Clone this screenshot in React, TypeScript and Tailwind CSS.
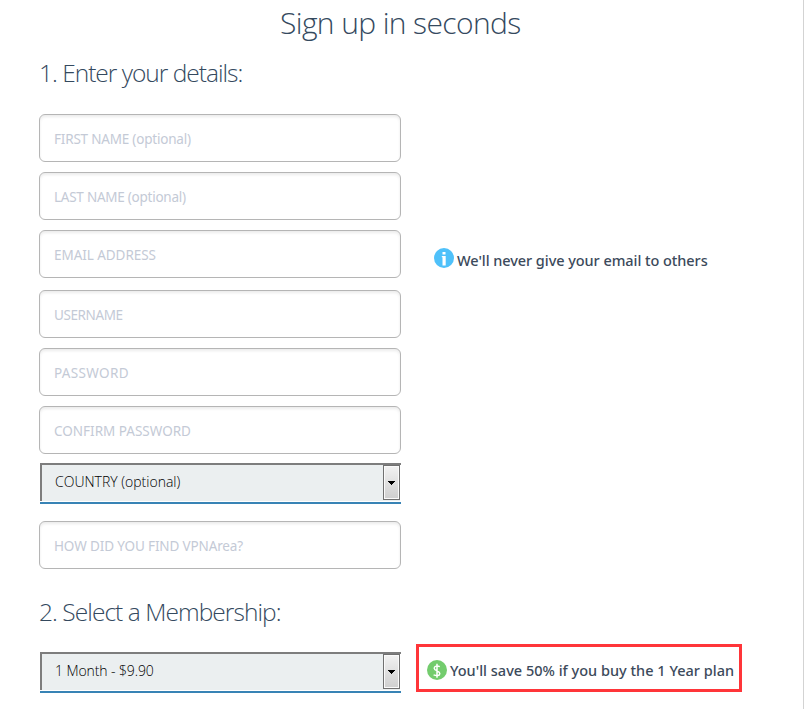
type FieldProps = { label: string; spacing: string; gap: string };

function Field({ label, spacing, gap }: FieldProps) {
  return (
    <div
      className={`flex h-12 w-[362px] items-center rounded-md border border-[#b5b5b5] bg-white pt-[2px] pl-[14px] font-['Noto_Sans',sans-serif] text-[13.5px] whitespace-nowrap text-[#c4cad6] shadow-[inset_0_2px_3px_#ececec] ${spacing} ${gap}`}
    >
      {label}
    </div>
  );
}

function Select({ label, spacing }: { label: string; spacing: string }) {
  return (
    <div className="ml-px h-[41px] w-[361px] border-b-2 border-[#3883b5] bg-white">
      <div className="flex h-[38px] w-full border-t-2 border-l-2 border-[#7d7d7d] bg-[#ebeff0]">
        <div
          className={`flex-1 pl-[13px] font-['Open_Sans',sans-serif] text-[14px] leading-[33px] font-light whitespace-nowrap text-black ${spacing}`}
        >
          {label}
        </div>
        <div className="flex h-[35px] w-[17px] items-center justify-center border border-[#707070] bg-gradient-to-b from-[#f2f2f2] to-[#cfcfcf] shadow-[inset_0_0_0_1px_#fafafa]">
          <svg width="7" height="4" viewBox="0 0 7 4" shapeRendering="crispEdges">
            <path d="M0 0h7v1h-1v1h-1v1h-1v1h-1v-1h-1v-1h-1v-1h-1z" fill="#000" />
          </svg>
        </div>
        <div className="w-px bg-white" />
      </div>
    </div>
  );
}

export default function App() {
  return (
    <main className="h-[709px] w-[804px] overflow-hidden border-r border-[#d3d3d3] bg-white font-['Open_Sans',sans-serif] text-[#34495e]">
      <h1 className="pt-[3px] pl-[280px] text-[30px] leading-10 font-light tracking-[-0.62px] whitespace-nowrap">Sign up in seconds</h1>
      <h2 className="mt-[14px] pl-[39px] text-[24.5px] leading-8 font-light tracking-[-1px] whitespace-nowrap">1. Enter your details:</h2>
      <div className="mt-[25px] flex pl-[39px]">
        <form className="w-[362px]">
          <Field label="FIRST NAME (optional)" spacing="tracking-[-0.2px]" gap="" />
          <Field label="LAST NAME (optional)" spacing="tracking-[-0.25px]" gap="mt-[10px]" />
          <Field label="EMAIL ADDRESS" spacing="tracking-[-0.05px]" gap="mt-[10px]" />
          <Field label="USERNAME" spacing="tracking-[-0.4px]" gap="mt-3" />
          <Field label="PASSWORD" spacing="tracking-[0.35px]" gap="mt-[10px]" />
          <Field label="CONFIRM PASSWORD" spacing="tracking-[0px]" gap="mt-[10px] mb-[9px]" />
          <Select label="COUNTRY (optional)" spacing="tracking-[0px]" />
          <Field label="HOW DID YOU FIND VPNArea?" spacing="tracking-[-0.13px]" gap="mt-[17px]" />
        </form>
        <div className="mt-[133px] ml-[33px] flex h-6 items-start">
          <svg className="mt-px" width="20" height="20" viewBox="0 0 20 20">
            <circle cx="10" cy="10" r="10" fill="#4fc1fa" />
            <path d="M8.5 4h3v2.5h-3zM7.8 8h3.9v9.5H8.5V9.2h-.7z" fill="#fff" />
          </svg>
          <span className="mt-px ml-[3px] font-['Noto_Sans',sans-serif] text-[14.5px] leading-6 font-medium tracking-[-0.06px] whitespace-nowrap text-[#3c4a5b]">We'll never give your email to others</span>
        </div>
      </div>
      <h2 className="mt-[27px] pl-[39px] text-[24.5px] leading-8 font-light tracking-[-0.94px] whitespace-nowrap">2. Select a Membership:</h2>
      <div className="mt-[16px] flex items-start pl-[39px]">
        <div className="mt-2 w-[362px]">
          <Select label="1 Month - $9.90" spacing="tracking-[-0.1px]" />
        </div>
        <div className="ml-[15px] flex h-[48px] w-[326px] items-start border-3 border-[#ff3539] pt-[11px] pl-2">
          <svg className="mt-[2px]" width="20" height="20" viewBox="0 0 20 20">
            <circle cx="10" cy="10" r="10" fill="#73cc6d" />
            <path d="M12.8 6.6c-2.4-1-5.6-.8-5.6 1.6 0 2.9 5.6 2.4 5.6 5.2 0 2.4-3.2 2.7-6.2 1.5M10 3.8v14" fill="none" stroke="#fff" strokeWidth="1.5" />
          </svg>
          <span className="ml-[3px] font-['Noto_Sans',sans-serif] text-[14.5px] leading-6 font-medium tracking-[0.01px] whitespace-nowrap text-[#3c4a5b]">You'll save 50% if you buy the 1 Year plan</span>
        </div>
      </div>
    </main>
  );
}
